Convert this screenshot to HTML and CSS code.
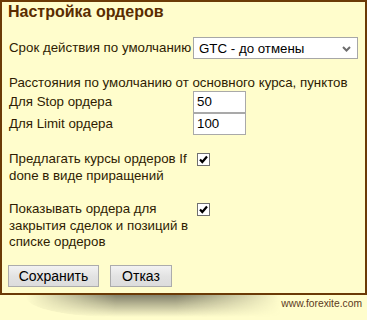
FILE: index.html
```html
<!DOCTYPE html>
<html lang="ru">
<head>
<meta charset="utf-8">
<title>Настройка ордеров</title>
<link rel="stylesheet" href="styles.css">
</head>
<body>
<div class="panel">
  <h1 class="title">Настройка ордеров</h1>

  <div class="row row-select">
    <div class="label">Срок действия по умолчанию</div>
    <div class="select">
      <span class="select-text">GTC - до отмены</span>
      <svg class="chevron" width="9" height="6" viewBox="0 0 9 6"><path d="M1 1 L4.5 4.5 L8 1" fill="none" stroke="#6d6d6d" stroke-width="2"/></svg>
    </div>
  </div>

  <div class="section">Расстояния по умолчанию от основного курса, пунктов</div>

  <div class="row row-input">
    <div class="label">Для Stop ордера</div>
    <div class="input">50</div>
  </div>
  <div class="row row-input">
    <div class="label">Для Limit ордера</div>
    <div class="input">100</div>
  </div>

  <div class="row row-check first">
    <div class="label wrap">Предлагать курсы ордеров If<br>done в виде приращений</div>
    <span class="checkbox"><svg width="11" height="11" viewBox="0 0 11 11"><path d="M2 5.5 L4.3 8 L9 2.5" fill="none" stroke="#000" stroke-width="2.2"/></svg></span>
  </div>

  <div class="row row-check second">
    <div class="label wrap">Показывать ордера для<br>закрытия сделок и позиций в<br>списке ордеров</div>
    <span class="checkbox"><svg width="11" height="11" viewBox="0 0 11 11"><path d="M2 5.5 L4.3 8 L9 2.5" fill="none" stroke="#000" stroke-width="2.2"/></svg></span>
  </div>

  <div class="buttons">
    <button class="btn btn-save">Сохранить</button>
    <button class="btn btn-cancel">Отказ</button>
  </div>
</div>
<div class="footer">
  <div class="shadow"></div>
  <span class="site">www.forexite.com</span>
</div>
</body>
</html>
```

FILE: styles.css
```css
html, body {
  margin: 0;
  padding: 0;
}
body {
  width: 367px;
  height: 320px;
  overflow: hidden;
  background: #fffdcc;
  font-family: "Liberation Sans", Arial, sans-serif;
  font-size: 13.3px;
  color: #2e1c02;
}
.panel {
  box-sizing: border-box;
  width: 367px;
  height: 295px;
  border: 2px solid #6b3a06;
  background: #fffdcc;
  padding: 0 7px;
}
.title {
  margin: 0 0 0 -1px;
  font-size: 16px;
  line-height: 20px;
  font-weight: bold;
  color: #5a2c00;
}
.row {
  display: flex;
  align-items: center;
}
.label {
  width: 184px;
  flex: none;
  line-height: 16.5px;
}
.row-select {
  margin-top: 15px;
  height: 22px;
}
.select {
  box-sizing: border-box;
  width: 168px;
  height: 22px;
  border: 1px solid #a7a7a7;
  background: #fff;
  display: flex;
  align-items: center;
  justify-content: space-between;
  padding: 1px 6px 0 5px;
  color: #000;
}
.select-text {
  line-height: 16px;
}
.chevron {
  margin-top: 1px;
}
.section {
  margin-top: 16px;
  line-height: 16px;
}
.row-input {
  height: 22px;
}
.input {
  box-sizing: border-box;
  width: 53px;
  height: 22px;
  border: 1px solid #a9a9a9;
  background: #fff;
  padding: 2px 0 0 3px;
  line-height: 16px;
  color: #000;
}
.row-check {
  align-items: flex-start;
}
.row-check.first {
  margin-top: 16px;
}
.row-check.second {
  margin-top: 17px;
}
.checkbox {
  box-sizing: border-box;
  width: 13px;
  height: 13px;
  margin-left: 4px;
  margin-top: 2px;
  border: 1px solid #707070;
  background: #fff;
  display: flex;
  align-items: center;
  justify-content: center;
}
.buttons {
  display: flex;
  gap: 11px;
  margin-top: 14px;
  margin-left: -1px;
}
.btn {
  box-sizing: border-box;
  height: 22px;
  border: 1px solid #acacac;
  border-radius: 0;
  background: linear-gradient(#f2f2f2, #e3e3e3 50%, #dcdcdc);
  font-family: "Liberation Sans", Arial, sans-serif;
  font-size: 14px;
  color: #000;
  padding: 0;
  line-height: 18px;
}
.btn-save {
  width: 91px;
}
.btn-cancel {
  width: 62px;
}
.footer {
  position: relative;
  height: 25px;
  display: flex;
  justify-content: flex-end;
  align-items: flex-start;
  padding-right: 5px;
}
.shadow {
  position: absolute;
  left: 26px;
  top: 0;
  width: 300px;
  height: 22px;
  border-bottom-left-radius: 90px 20px;
  background: linear-gradient(to bottom, rgba(110, 108, 90, 0.85), rgba(255, 253, 204, 0) 100%);
  -webkit-mask-image: linear-gradient(to right, transparent 0%, #000 30%, #000 50%, transparent 85%);
  mask-image: linear-gradient(to right, transparent 0%, #000 30%, #000 50%, transparent 85%);
}
.site {
  position: relative;
  margin-top: 2px;
  font-size: 10.3px;
  line-height: 13px;
  color: #5c3a1c;
}
```
